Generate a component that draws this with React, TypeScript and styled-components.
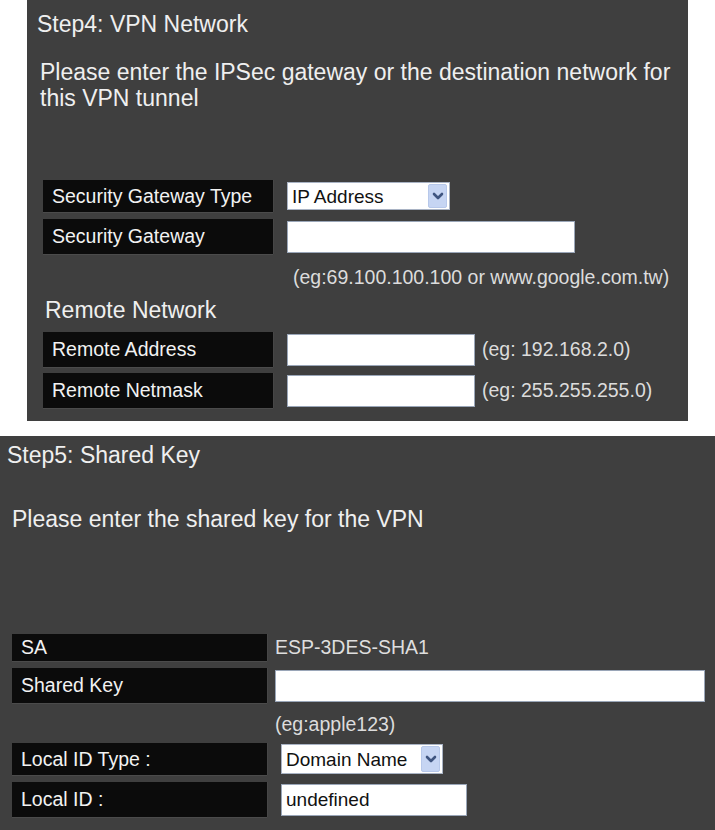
import styled, { createGlobalStyle } from "styled-components";

const GlobalStyle = createGlobalStyle`
  html, body {
    margin: 0;
    padding: 0;
    background: #ffffff;
  }
  body {
    font-family: "Liberation Sans", Arial, sans-serif;
  }
`;

const ChevronIcon = () => (
  <svg width="12" height="10" viewBox="0 0 12 10">
    <path d="M2 3 L6 7 L10 3" fill="none" stroke="#3f5580" strokeWidth="2.6" strokeLinecap="round" strokeLinejoin="round" />
  </svg>
);

type SelectProps = {
  value: string;
  width: number;
  height: number;
};

const FakeSelect = ({ value, width, height }: SelectProps) => {
  return (
    <SelectWrap style={{ width, height }}>
      <NativeSelect defaultValue={value}>
        <option>{value}</option>
      </NativeSelect>
      <ArrowBox>
        <ChevronIcon />
      </ArrowBox>
    </SelectWrap>
  );
};

export default function App() {
  return (
    <>
      <GlobalStyle />
      <Page>
        <Panel $width={661} $indent={27} $top={11}>
          <Heading $left={10}>Step4: VPN Network</Heading>
          <Paragraph $left={13} $mt={22}>
            Please enter the IPSec gateway or the destination network for this VPN tunnel
          </Paragraph>

          <Form $left={16}>
            <Row $mt={69} $gap={14}>
              <Label $w={230} $h={32}>Security Gateway Type</Label>
              <FakeSelect value="IP Address" width={163} height={28} />
            </Row>
            <Row $mt={7} $gap={14}>
              <Label $w={230} $h={35}>Security Gateway</Label>
              <TextInput $w={288} />
            </Row>
            <HintRow $mt={12} $offset={250}>(eg:69.100.100.100 or www.google.com.tw)</HintRow>
          </Form>

          <SubHeading $left={18}>Remote Network</SubHeading>

          <Form $left={16}>
            <Row $mt={9} $gap={14}>
              <Label $w={230} $h={35}>Remote Address</Label>
              <TextInput $w={188} />
              <InlineHint>(eg: 192.168.2.0)</InlineHint>
            </Row>
            <Row $mt={6} $gap={14}>
              <Label $w={230} $h={35}>Remote Netmask</Label>
              <TextInput $w={188} />
              <InlineHint>(eg: 255.255.255.0)</InlineHint>
            </Row>
          </Form>
        </Panel>

        <Panel $width={715} $indent={0} $top={6} $mt={15}>
          <Heading $left={7}>Step5: Shared Key</Heading>
          <Paragraph $left={12} $mt={38}>
            Please enter the shared key for the VPN
          </Paragraph>

          <Form $left={12}>
            <Row $mt={102} $gap={8}>
              <Label $w={255} $h={27}>SA</Label>
              <ValueText>ESP-3DES-SHA1</ValueText>
            </Row>
            <Row $mt={7} $gap={8}>
              <Label $w={255} $h={35}>Shared Key</Label>
              <TextInput $w={430} />
            </Row>
            <HintRow $mt={10} $offset={263}>(eg:apple123)</HintRow>
            <Row $mt={8} $gap={14}>
              <Label $w={255} $h={32}>Local ID Type :</Label>
              <FakeSelect value="Domain Name" width={162} height={30} />
            </Row>
            <Row $mt={7} $gap={14}>
              <Label $w={255} $h={35}>Local ID :</Label>
              <TextInput $w={186} defaultValue="undefined" />
            </Row>
          </Form>
        </Panel>
      </Page>
    </>
  );
}

const Page = styled.div`
  display: flex;
  flex-direction: column;
  align-items: flex-start;
  width: 715px;
`;

const Panel = styled.section<{ $width: number; $indent: number; $top: number; $mt?: number }>`
  box-sizing: border-box;
  width: ${({ $width }) => $width}px;
  margin-left: ${({ $indent }) => $indent}px;
  margin-top: ${({ $mt }) => $mt ?? 0}px;
  padding: ${({ $top }) => $top}px 12px 13px 0;
  background: #3f3f3f;
  color: #eeeeee;
`;

const Heading = styled.h2<{ $left: number }>`
  margin: 0 0 0 ${({ $left }) => $left}px;
  font-size: 23px;
  line-height: 26px;
  font-weight: normal;
  color: #efefef;
`;

const SubHeading = styled.h3<{ $left: number }>`
  margin: 9px 0 0 ${({ $left }) => $left}px;
  font-size: 23px;
  line-height: 26px;
  font-weight: normal;
  color: #efefef;
`;

const Paragraph = styled.p<{ $left: number; $mt: number }>`
  margin: ${({ $mt }) => $mt}px 0 0 ${({ $left }) => $left}px;
  font-size: 23px;
  line-height: 26px;
  color: #efefef;
`;

const Form = styled.div<{ $left: number }>`
  display: flex;
  flex-direction: column;
  padding-left: ${({ $left }) => $left}px;
`;

const Row = styled.div<{ $mt: number; $gap: number }>`
  display: flex;
  align-items: center;
  gap: ${({ $gap }) => $gap}px;
  margin-top: ${({ $mt }) => $mt}px;
`;

const Label = styled.div<{ $w: number; $h: number }>`
  box-sizing: border-box;
  display: flex;
  align-items: center;
  flex: none;
  width: ${({ $w }) => $w}px;
  height: ${({ $h }) => $h}px;
  padding-left: 9px;
  background: #0b0b0b;
  box-shadow: 0 1px 0 #4b4b4b, 1px 0 0 #464646;
  font-size: 19.5px;
  color: #f2f2f2;
  white-space: nowrap;
`;

const TextInput = styled.input.attrs({ type: "text" })<{ $w: number }>`
  box-sizing: border-box;
  flex: none;
  width: ${({ $w }) => $w}px;
  height: 32px;
  margin: 0;
  padding: 0 4px;
  border: 1px solid #9aa6b8;
  background: #ffffff;
  font-family: "Liberation Sans", Arial, sans-serif;
  font-size: 19px;
  color: #111111;
  outline: none;
`;

const SelectWrap = styled.div`
  box-sizing: border-box;
  display: flex;
  align-items: stretch;
  flex: none;
  padding: 1px;
  border: 1px solid #a9b3c4;
  background: #ffffff;
`;

const NativeSelect = styled.select`
  flex: 1;
  min-width: 0;
  margin: 0;
  padding: 0 0 0 3px;
  border: none;
  background: transparent;
  appearance: none;
  font-family: "Liberation Sans", Arial, sans-serif;
  font-size: 19px;
  color: #111111;
  outline: none;
`;

const ArrowBox = styled.span`
  box-sizing: border-box;
  display: flex;
  align-items: center;
  justify-content: center;
  width: 19px;
  margin-right: 1px;
  border: 1px solid #b7c8ea;
  border-radius: 2px;
  background: #c6d5f3;
`;

const HintRow = styled.div<{ $mt: number; $offset: number }>`
  margin-top: ${({ $mt }) => $mt}px;
  padding-left: ${({ $offset }) => $offset}px;
  font-size: 19.5px;
  line-height: 22px;
  color: #dcdcdc;
  white-space: nowrap;
`;

const InlineHint = styled.span`
  margin-left: -7px;
  font-size: 19.5px;
  color: #dcdcdc;
  white-space: nowrap;
`;

const ValueText = styled.span`
  font-size: 19.5px;
  color: #dedede;
  white-space: nowrap;
`;
